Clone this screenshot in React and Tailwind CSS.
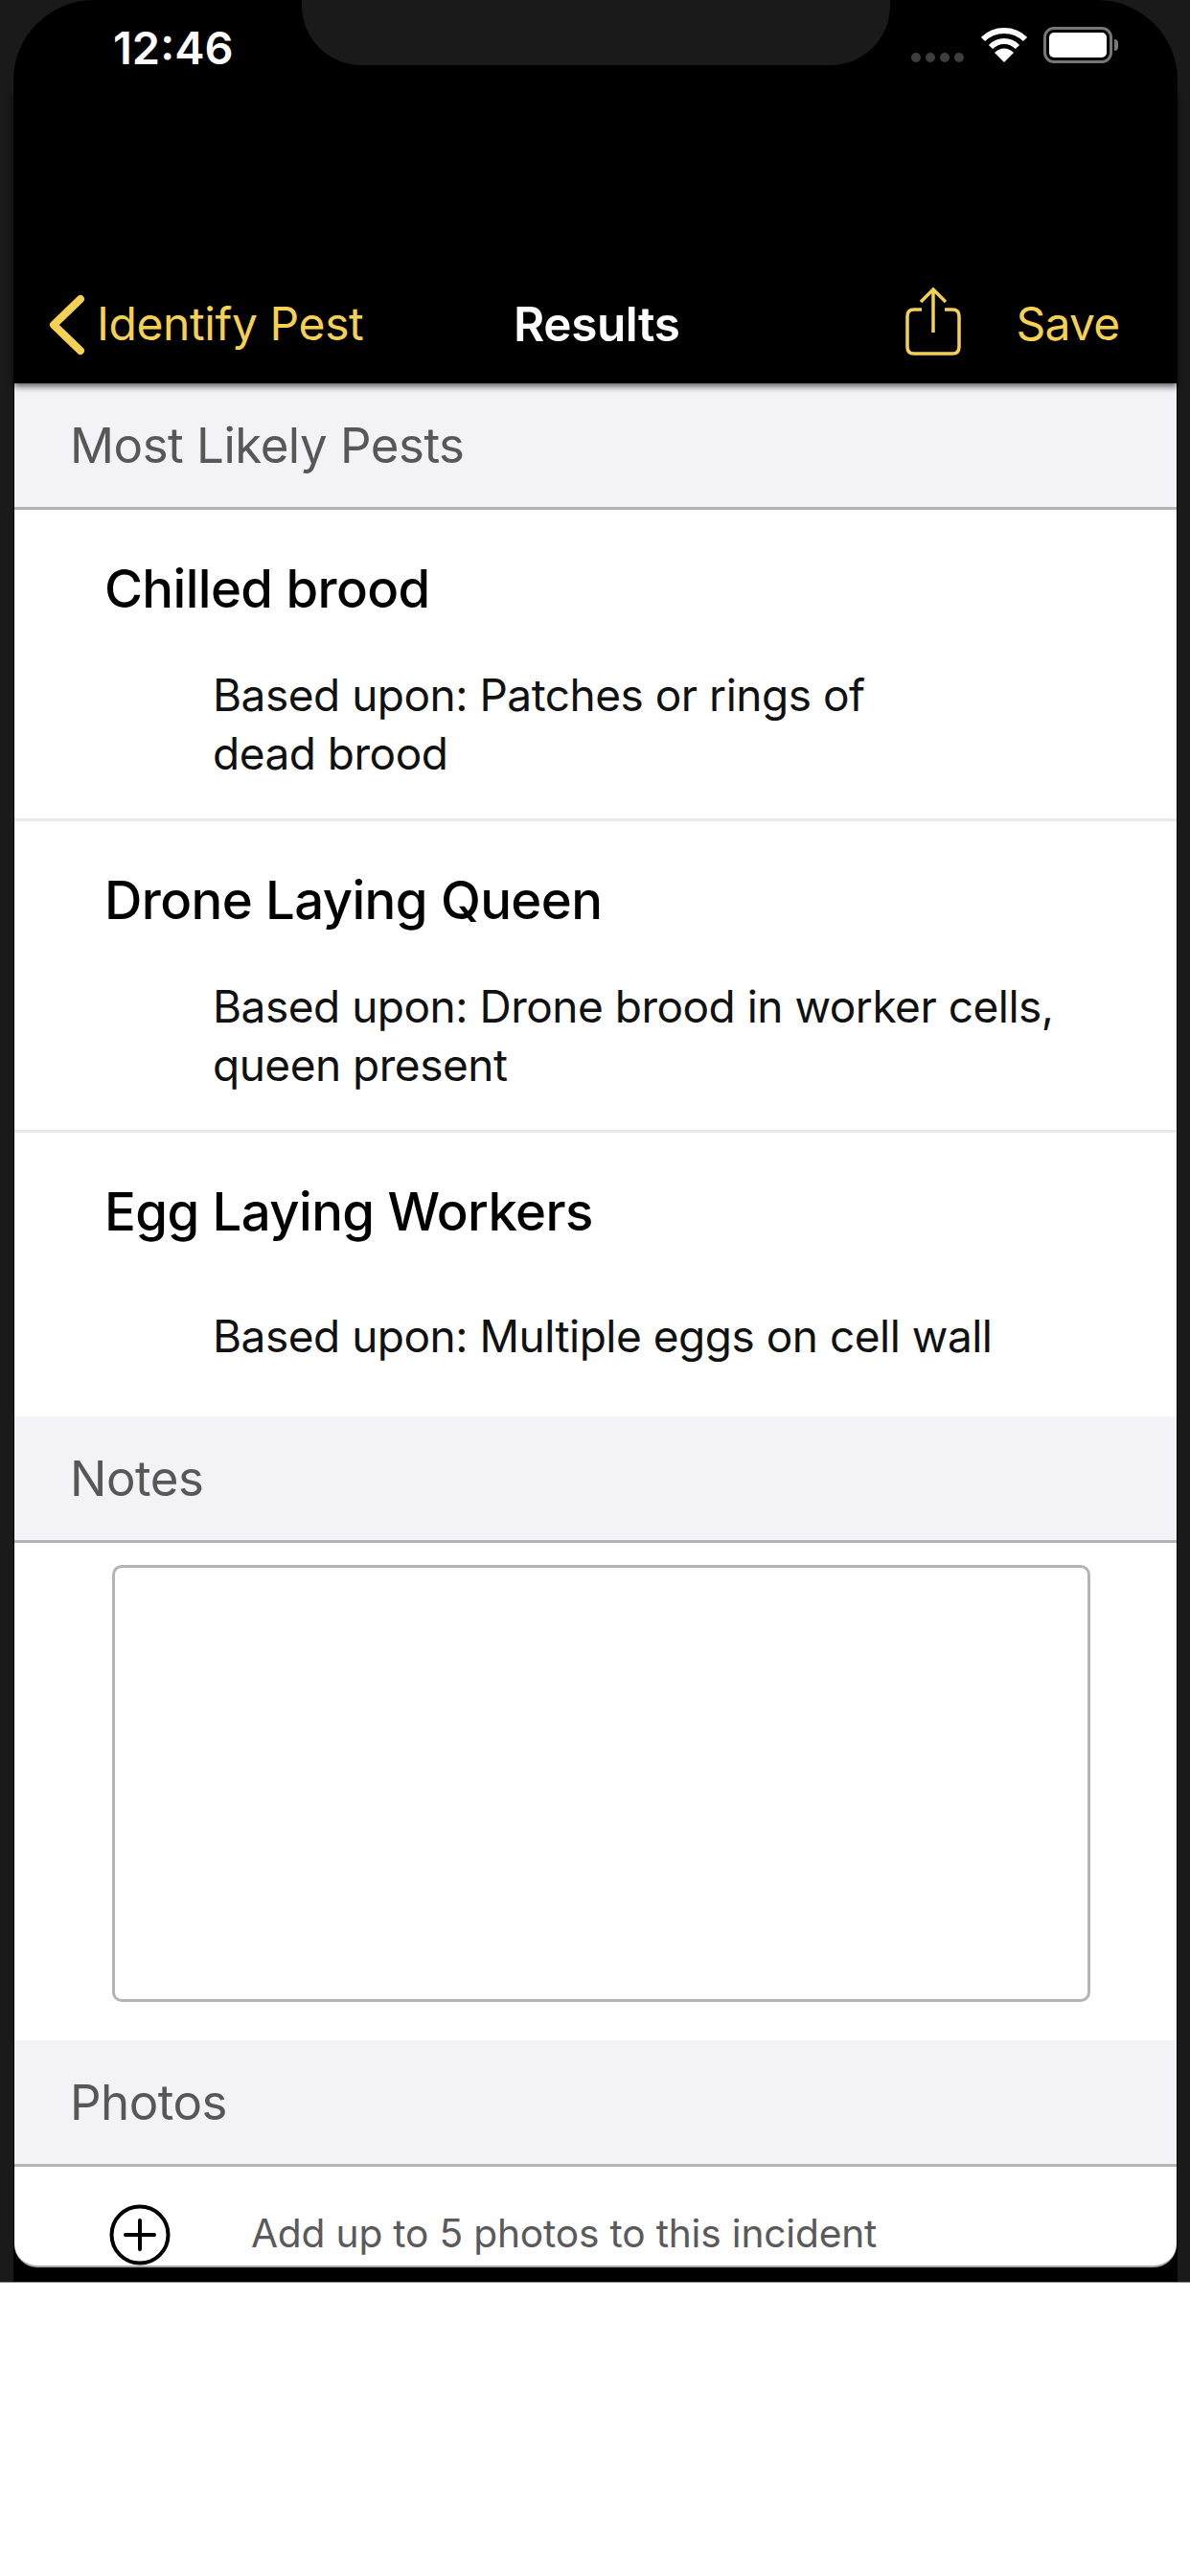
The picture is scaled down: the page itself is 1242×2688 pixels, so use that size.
import React from 'react';

const font = { fontFamily: 'Inter, "Liberation Sans", sans-serif' };

function SectionHeader({ title }) {
  return (
    <div className="h-[132px] bg-[#f2f2f7] border-b-[3px] border-[#b4b4b6] flex items-center pl-[58px] text-[51px] leading-none text-[#575757] tracking-[-0.5px]">
      {title}
    </div>
  );
}

function PestRow({ name, lines, divider, gap }) {
  return (
    <div className={`pl-[94px] ${divider ? 'h-[325px] border-b-[3px] border-[#e8e8ea]' : 'h-[296px]'}`}>
      <div className="pt-[50px] text-[54.5px] leading-[64px] font-medium text-black tracking-[-0.6px]">{name}</div>
      <div className={`pl-[113px] ${gap} text-[46px] leading-[61px] text-[#111] tracking-[-0.5px]`}>
        {lines.map((l) => (
          <div key={l}>{l}</div>
        ))}
      </div>
    </div>
  );
}

export default function App() {
  return (
    <div className="w-[1242px] h-[2688px] bg-white" style={font}>
      <div className="h-[2382px] bg-[#1a1a1a] pl-[14px] pr-[13px] border-b border-[#888]">
        <div className="relative h-full bg-black rounded-t-[84px] flex flex-col pb-[15px]">
          {/* notch */}
          <div className="absolute left-[301px] top-0 w-[614px] h-[68px] bg-[#1a1a1a] rounded-b-[62px]" />

          {/* status bar */}
          <div className="h-[96px] flex items-start text-white">
            <div className="ml-[104px] mt-[23px] text-[47px] leading-[54px] font-semibold">12:46</div>
            <div className="ml-auto mr-[62px] mt-[28px] flex items-start">
              <div className="flex gap-[5px] mt-[27px] mr-[18px]">
                <span className="w-[10px] h-[10px] rounded-full bg-[#3e3e3e]" />
                <span className="w-[10px] h-[10px] rounded-full bg-[#3e3e3e]" />
                <span className="w-[10px] h-[10px] rounded-full bg-[#3e3e3e]" />
                <span className="w-[10px] h-[10px] rounded-full bg-[#3e3e3e]" />
              </div>
              <svg width="48" height="38" viewBox="0 0 48 38" className="mr-[17px]">
                <path d="M2 13 C14 1 34 1 46 13" fill="none" stroke="#fff" strokeWidth="6" />
                <path d="M10 21 C18 13 30 13 38 21" fill="none" stroke="#fff" strokeWidth="6" />
                <path d="M14 27 C20 21 28 21 34 27 L24 37 Z" fill="#fff" />
              </svg>
              <div className="w-[72px] h-[38px] rounded-[11px] border-[3px] border-[#777] p-[3px]">
                <div className="w-full h-full bg-white rounded-[5px]" />
              </div>
              <div className="w-[4px] h-[12px] bg-[#777] rounded-r-full mt-[13px] ml-[2px]" />
            </div>
          </div>

          {/* nav bar */}
          <div className="relative z-10 h-[304px] bg-black shadow-[0_3px_7px_rgba(0,0,0,0.65)] flex items-start pt-[213px] text-[48px] leading-[58px] text-[#f4d053] tracking-[-0.4px]">
            <svg width="44" height="66" viewBox="0 0 44 66" className="ml-[34px] -mt-[3px]">
              <path d="M36 6 L8 33 L36 60" fill="none" stroke="#f4d053" strokeWidth="8" strokeLinecap="round" strokeLinejoin="round" />
            </svg>
            <span className="ml-[9px] w-[435px]">Identify Pest</span>
            <span className="font-semibold text-white text-[49.5px]">Results</span>
            <svg width="60" height="74" viewBox="0 0 60 74" className="ml-[234px] -mt-[10px]">
              <path d="M18 24 H10 Q3 24 3 31 V63 Q3 70 10 70 H50 Q57 70 57 63 V31 Q57 24 50 24 H42" fill="none" stroke="#f4d053" strokeWidth="3.5" />
              <path d="M30 48 V4 M17 16 L30 3 L43 16" fill="none" stroke="#f4d053" strokeWidth="3.5" />
            </svg>
            <span className="ml-[57px] tracking-[-0.8px]">Save</span>
          </div>

          {/* content */}
          <div className="flex-1 mx-[1px] bg-white rounded-b-[24px] overflow-hidden flex flex-col border-b-2 border-[#a8a8a8]">
            <SectionHeader title="Most Likely Pests" />
            <PestRow name="Chilled brood" gap="mt-[49px]" lines={['Based upon: Patches or rings of', 'dead brood']} divider />
            <PestRow name="Drone Laying Queen" gap="mt-[49px]" lines={['Based upon: Drone brood in worker cells,', 'queen present']} divider />
            <PestRow name="Egg Laying Workers" gap="mt-[68px]" lines={['Based upon: Multiple eggs on cell wall']} />

            <SectionHeader title="Notes" />
            <div className="h-[519px] pt-[23px] pl-[102px]">
              <div className="w-[1021px] h-[456px] rounded-[10px] border-[3px] border-[#b4b4b6]" />
            </div>

            <SectionHeader title="Photos" />
            <div className="flex-1 flex items-center pl-[99px] pt-[38px]">
              <svg width="64" height="64" viewBox="0 0 64 64">
                <circle cx="32" cy="32" r="29.5" fill="none" stroke="#000" strokeWidth="4" />
                <path d="M17 32 H47 M32 17 V47" stroke="#000" strokeWidth="4" strokeLinecap="round" />
              </svg>
              <span className="ml-[84px] text-[40.7px] leading-none text-[#5a5a5c] tracking-[-0.2px]">Add up to 5 photos to this incident</span>
            </div>
          </div>
        </div>
      </div>
    </div>
  );
}
